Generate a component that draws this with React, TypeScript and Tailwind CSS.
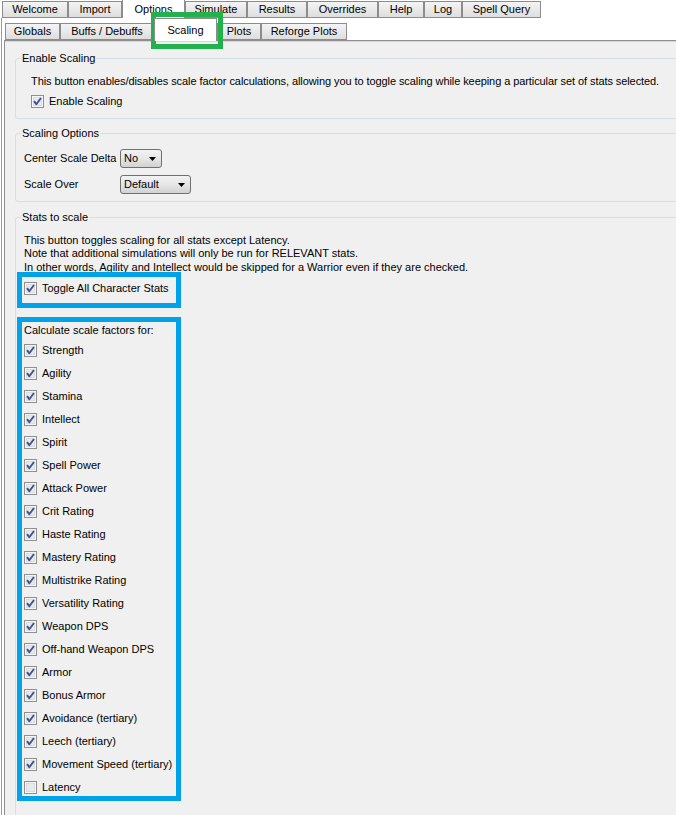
const topTabs = [
  { label: 'Welcome', w: 'w-[66px]' },
  { label: 'Import', w: 'w-[54px]' },
  { label: 'Options', w: 'w-[63px]', active: true },
  { label: 'Simulate', w: 'w-[62px]' },
  { label: 'Results', w: 'w-[60px]' },
  { label: 'Overrides', w: 'w-[71px]' },
  { label: 'Help', w: 'w-[46px]' },
  { label: 'Log', w: 'w-[38px]' },
  { label: 'Spell Query', w: 'w-[79px]' },
]

const subTabs = [
  { label: 'Globals', w: 'w-[55px]' },
  { label: 'Buffs / Debuffs', w: 'w-[94px]' },
  { label: 'Scaling', w: 'w-[63px]', active: true },
  { label: 'Plots', w: 'w-[44px]' },
  { label: 'Reforge Plots', w: 'w-[86px]' },
]

const stats = [
  'Strength',
  'Agility',
  'Stamina',
  'Intellect',
  'Spirit',
  'Spell Power',
  'Attack Power',
  'Crit Rating',
  'Haste Rating',
  'Mastery Rating',
  'Multistrike Rating',
  'Versatility Rating',
  'Weapon DPS',
  'Off-hand Weapon DPS',
  'Armor',
  'Bonus Armor',
  'Avoidance (tertiary)',
  'Leech (tertiary)',
  'Movement Speed (tertiary)',
  'Latency',
]

const CheckBox = ({ checked = true }: { checked?: boolean }) => (
  <svg width="13" height="13" viewBox="0 0 13 13" className="shrink-0">
    <rect x="0.5" y="0.5" width="12" height="12" fill="#f6f6f6" stroke="#8e8f8f" />
    <rect x="2" y="2" width="9" height="9" fill="#dcdcdc" />
    <rect x="3" y="3" width="7" height="7" fill="#e9e9e9" />
    {checked && (
      <path d="M3 6.2 L5.3 9.2 L10 3" fill="none" stroke="#3d5196" strokeWidth="1.9" strokeLinejoin="round" />
    )}
  </svg>
)

const Check = ({ label, checked = true }: { label: string; checked?: boolean }) => (
  <div className="flex h-[13px] items-center">
    <CheckBox checked={checked} />
    <span className="ml-[5px] whitespace-nowrap">{label}</span>
  </div>
)

const Combo = ({ value, w }: { value: string; w: string }) => (
  <div
    className={`${w} flex h-[19px] items-center justify-between rounded-[3px] border border-[#707070] bg-gradient-to-b from-[#f2f2f2] via-[#e6e6e6] to-[#d2d2d2] pl-[3px] pr-[5px]`}
  >
    <span>{value}</span>
    <svg width="7" height="4" viewBox="0 0 7 4">
      <path d="M0 0 H7 L3.5 4 Z" fill="#000" />
    </svg>
  </div>
)

export default function App() {
  return (
    <div className="relative h-[815px] w-[676px] overflow-hidden bg-white font-['Liberation_Sans',Arial,sans-serif] text-[11px] leading-[13px] text-black">
      <div className="flex h-[18px] items-end pl-[2px]">
        {topTabs.map((t) =>
          t.active ? (
            <div
              key={t.label}
              className={`${t.w} flex h-[18px] items-center justify-center border-x border-[#8c8c8c] bg-white`}
            >
              {t.label}
            </div>
          ) : (
            <div
              key={t.label}
              className={`${t.w} flex h-[17px] items-center justify-center border border-[#8c8c8c] bg-gradient-to-b from-[#f4f4f4] to-[#dedede]`}
            >
              {t.label}
            </div>
          ),
        )}
      </div>

      <div className="ml-px flex h-[797px] flex-col border-l border-[#9a9a9a]">
        <div className="flex h-[22px] items-end pl-[3px]">
          {subTabs.map((t) =>
            t.active ? (
              <div
                key={t.label}
                className={`${t.w} relative z-10 -mb-px flex h-[23px] items-center justify-center border-x border-t border-[#8c8c8c] bg-white`}
              >
                {t.label}
              </div>
            ) : (
              <div
                key={t.label}
                className={`${t.w} flex h-[17px] items-center justify-center border border-[#8c8c8c] bg-gradient-to-b from-[#f4f4f4] to-[#dedede]`}
              >
                {t.label}
              </div>
            ),
          )}
        </div>

        <div className="ml-[2px] flex-1 border-l border-t border-[#8e8e8e] bg-[#f0f0f0] shadow-[inset_0_1px_0_#d8d8d8]">
          <fieldset className="ml-[10px] mt-[11px] w-[680px] rounded-[3px] border border-[#d5dfe5] pb-[10px] pl-[15px]">
            <legend className="-ml-[10px] px-px">Enable Scaling</legend>
            <div className="mt-[10px] whitespace-nowrap tracking-[-0.08px]">
              This button enables/disables scale factor calculations, allowing you to toggle scaling while keeping a
              particular set of stats selected.
            </div>
            <div className="mt-[7px]">
              <Check label="Enable Scaling" />
            </div>
          </fieldset>

          <fieldset className="ml-[10px] mt-[8px] w-[680px] rounded-[3px] border border-[#d5dfe5] pb-[7px] pl-[8px]">
            <legend className="-ml-[3px] px-px">Scaling Options</legend>
            <div className="mt-[9px] flex items-center">
              <span className="w-[96px]">Center Scale Delta</span>
              <Combo value="No" w="w-[42px]" />
            </div>
            <div className="mt-[7px] flex items-center">
              <span className="w-[96px]">Scale Over</span>
              <Combo value="Default" w="w-[71px]" />
            </div>
          </fieldset>

          <fieldset className="ml-[10px] mt-[9px] h-[700px] w-[680px] rounded-[3px] border border-[#d5dfe5] pl-[8px]">
            <legend className="-ml-[3px] px-px">Stats to scale</legend>
            <div className="mt-[10px] leading-[13.4px]">
              <div>This button toggles scaling for all stats except Latency.</div>
              <div>Note that additional simulations will only be run for RELEVANT stats.</div>
              <div>In other words, Agility and Intellect would be skipped for a Warrior even if they are checked.</div>
            </div>
            <div className="mt-[8px]">
              <Check label="Toggle All Character Stats" />
            </div>
            <div className="mt-[29px]">Calculate scale factors for:</div>
            <div className="mt-[2px] flex flex-col">
              {stats.map((s) => (
                <div key={s} className="flex h-[23px] items-center">
                  <Check label={s} checked={s !== 'Latency'} />
                </div>
              ))}
            </div>
          </fieldset>
        </div>
      </div>

      {/* annotation frames drawn over the screenshot */}
      <div className="absolute left-[151px] top-[12px] h-[37px] w-[72px] border-[5px] border-[#22b14c]" />
      <div className="absolute left-[17px] top-[272px] h-[36px] w-[164px] border-[5px] border-[#00a2e8]" />
      <div className="absolute left-[17px] top-[317px] h-[484px] w-[164px] border-[5px] border-[#00a2e8]" />
    </div>
  )
}
